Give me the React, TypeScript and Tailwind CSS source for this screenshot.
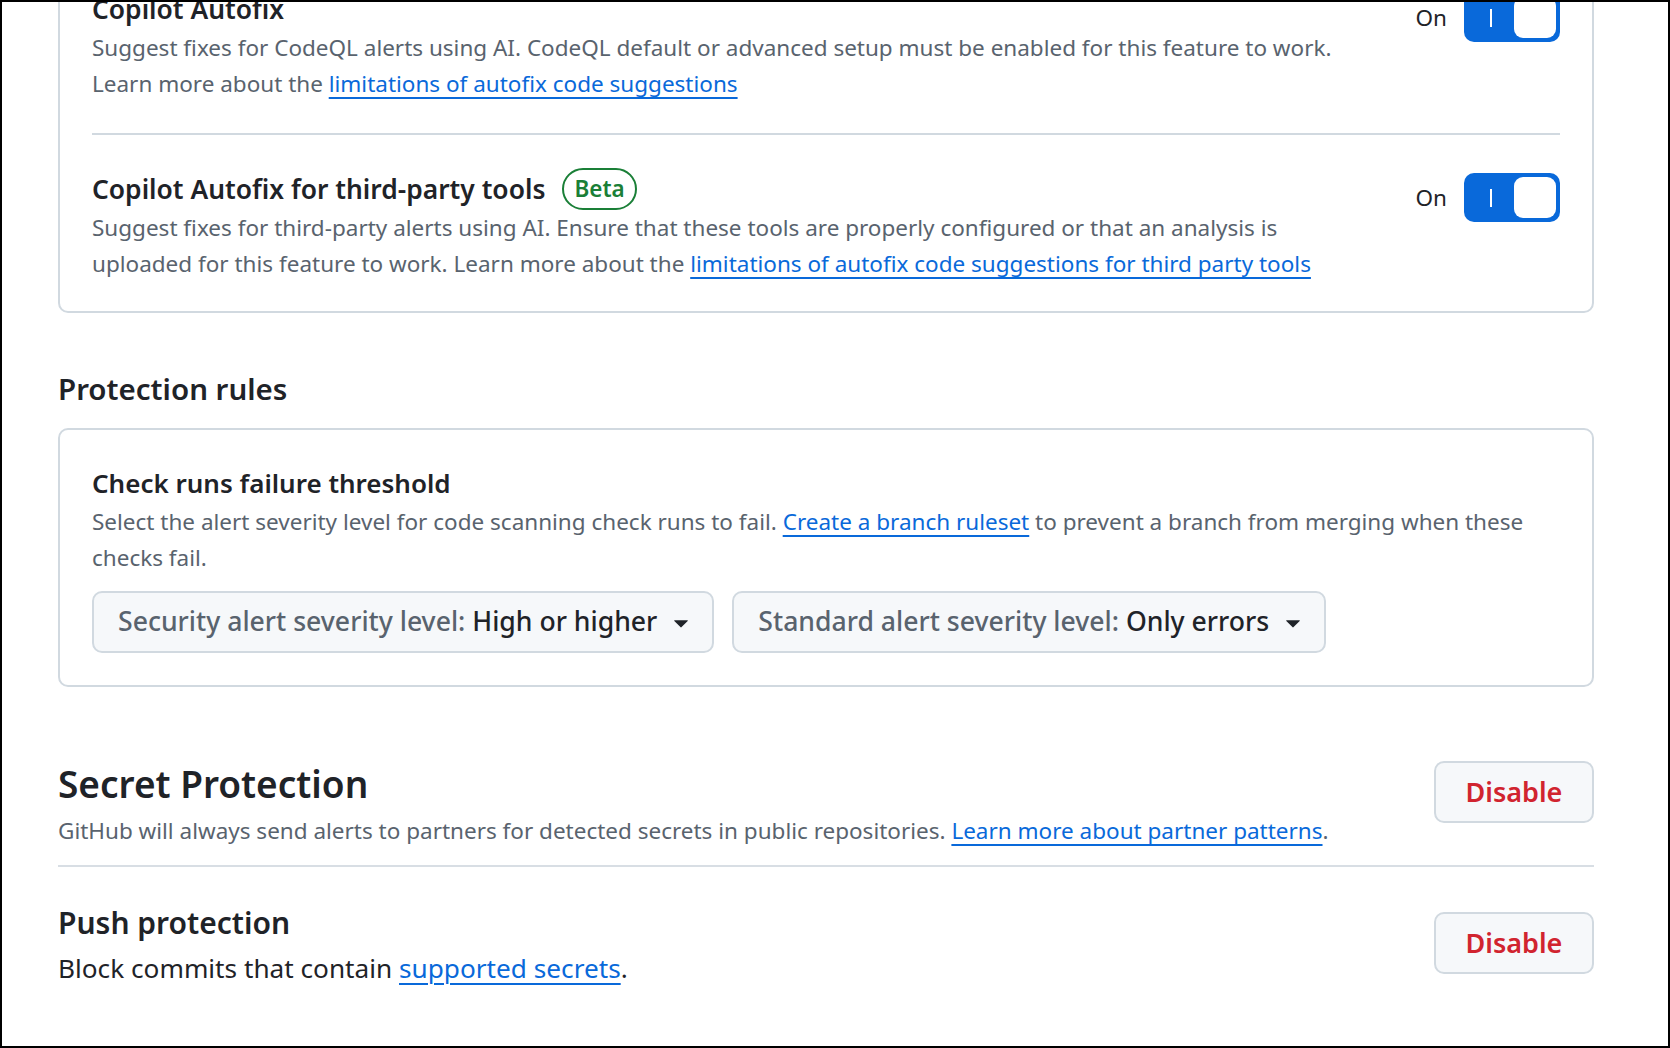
import React from "react";

function Toggle() {
  return (
    <div className="flex items-center gap-[17px]">
      <span className="text-[22.5px] leading-[36px] text-[#1f2328]">On</span>
      <div className="flex h-[49px] w-[96px] items-center rounded-[10px] bg-[#0969da] p-[4px]">
        <div className="flex flex-1 justify-center">
          <div className="h-[18px] w-[2.5px] bg-white" />
        </div>
        <div className="h-[41px] w-[42px] rounded-[9px] bg-white" />
      </div>
    </div>
  );
}

function Caret() {
  return (
    <svg width="30" height="30" viewBox="0 0 16 16" fill="#1f2328">
      <path d="m4.427 7.427 3.396 3.396a.25.25 0 0 0 .354 0l3.396-3.396A.25.25 0 0 0 11.396 7H4.604a.25.25 0 0 0-.177.427Z" />
    </svg>
  );
}

function Link({ children }: { children: React.ReactNode }) {
  return (
    <a className="text-[#0969da] underline decoration-[2px] underline-offset-[5px]" href="#">
      {children}
    </a>
  );
}

function DisableButton({ className = "" }: { className?: string }) {
  return (
    <button
      className={
        "flex h-[62px] w-[160px] items-center justify-center rounded-[10px] border-2 border-[#d1d9e0] bg-[#f6f8fa] text-[27px] font-semibold text-[#d1242f] " +
        className
      }
    >
      Disable
    </button>
  );
}

export default function App() {
  return (
    <div className="h-[1048px] w-[1670px] overflow-hidden border-2 border-black bg-white font-['Noto_Sans',sans-serif]">
      <div className="ml-[56px] -mt-[48px] w-[1536px]">
        {/* Copilot card */}
        <div className="rounded-[10px] border-2 border-[#d1d9e0] px-[32px]">
          <div className="flex items-start border-b-2 border-[#d1d9e0] pt-[32px] pb-[31px]">
            <div className="flex-1 pr-[48px]">
              <h3 className="text-[26.4px] font-semibold leading-[42px] text-[#1f2328]">Copilot Autofix</h3>
              <p className="text-[22.5px] leading-[36px] text-[#59636e]">
                Suggest fixes for CodeQL alerts using AI. CodeQL default or advanced setup must be enabled for this feature to work. Learn more about the{" "}
                <Link>limitations of autofix code suggestions</Link>
              </p>
            </div>
            <div className="mt-[5px]">
              <Toggle />
            </div>
          </div>
          <div className="flex items-start pt-[33px] pb-[29px]">
            <div className="flex-1 pr-[48px]">
              <div className="flex h-[42px] items-center gap-[17px]">
                <h3 className="text-[26.4px] font-semibold leading-[42px] text-[#1f2328]">Copilot Autofix for third-party tools</h3>
                <span className="flex h-[42px] items-center rounded-full border-2 border-[#1a7f37] px-[10px] text-[22.5px] font-semibold text-[#1a7f37]">
                  Beta
                </span>
              </div>
              <p className="text-[22.5px] leading-[36px] text-[#59636e]">
                Suggest fixes for third-party alerts using AI. Ensure that these tools are properly configured or that an analysis is uploaded for this feature to work. Learn more about the{" "}
                <Link>limitations of autofix code suggestions for third party tools</Link>
              </p>
            </div>
            <div className="mt-[5px]">
              <Toggle />
            </div>
          </div>
        </div>

        {/* Protection rules */}
        <h2 className="mt-[52px] mb-[15px] text-[29.5px] font-semibold leading-[48px] text-[#1f2328]">Protection rules</h2>
        <div className="rounded-[10px] border-2 border-[#d1d9e0] px-[32px] pt-[32px] pb-[32px]">
          <h3 className="text-[26px] font-semibold leading-[42px] text-[#1f2328]">Check runs failure threshold</h3>
          <p className="text-[22.5px] leading-[36px] text-[#59636e]">
            Select the alert severity level for code scanning check runs to fail. <Link>Create a branch ruleset</Link> to prevent a branch from merging when these checks fail.
          </p>
          <div className="mt-[15px] flex gap-[18px]">
            <button className="flex h-[62px] items-center gap-[9px] rounded-[10px] border-2 border-[#d1d9e0] bg-[#f6f8fa] pl-[24px] pr-[16px] text-[26.6px] font-medium">
              <span>
                <span className="text-[#59636e]">Security alert severity level: </span>
                <span className="text-[#1f2328]">High or higher</span>
              </span>
              <Caret />
            </button>
            <button className="flex h-[62px] items-center gap-[9px] rounded-[10px] border-2 border-[#d1d9e0] bg-[#f6f8fa] pl-[24px] pr-[16px] text-[26.6px] font-medium">
              <span>
                <span className="text-[#59636e]">Standard alert severity level: </span>
                <span className="text-[#1f2328]">Only errors</span>
              </span>
              <Caret />
            </button>
          </div>
        </div>

        {/* Secret Protection */}
        <div className="mt-[71px] flex items-start border-b-2 border-[#d8dee4] pb-[16px]">
          <div className="flex-1">
            <h2 className="text-[37px] font-semibold leading-[52px] text-[#1f2328]">Secret Protection</h2>
            <p className="mt-[3px] text-[22.5px] leading-[36px] text-[#59636e]">
              GitHub will always send alerts to partners for detected secrets in public repositories. <Link>Learn more about partner patterns</Link>.
            </p>
          </div>
          <DisableButton className="mt-[3px]" />
        </div>
        <div className="flex items-start pt-[35px]">
          <div className="flex-1">
            <h3 className="text-[30px] font-semibold leading-[42px] text-[#1f2328]">Push protection</h3>
            <p className="mt-[3px] text-[26.2px] leading-[42px] text-[#1f2328]">
              Block commits that contain <Link>supported secrets</Link>.
            </p>
          </div>
          <DisableButton className="mt-[10px]" />
        </div>
      </div>
    </div>
  );
}
